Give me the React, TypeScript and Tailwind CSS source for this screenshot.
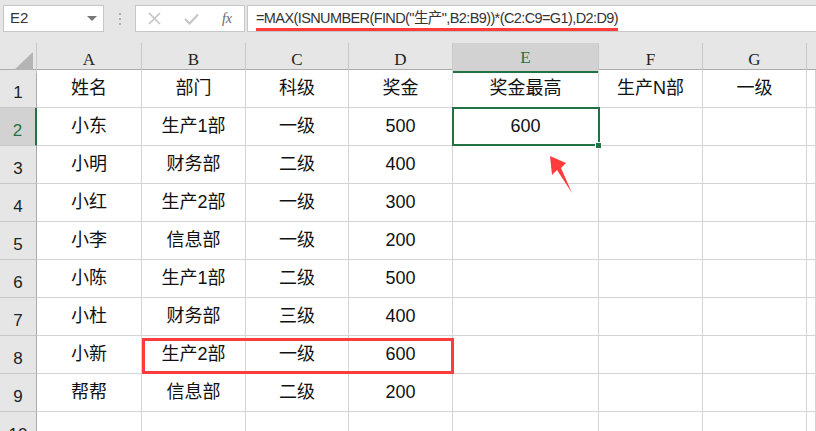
import React from "react";

// Spreadsheet snapshot: formula bar + grid A1:G10 with annotations

const COLS = ["A", "B", "C", "D", "E", "F", "G", ""];

const DATA: string[][] = [
  ["姓名", "部门", "科级", "奖金", "奖金最高", "生产N部", "一级"],
  ["小东", "生产1部", "一级", "500", "600", "", ""],
  ["小明", "财务部", "二级", "400", "", "", ""],
  ["小红", "生产2部", "一级", "300", "", "", ""],
  ["小李", "信息部", "一级", "200", "", "", ""],
  ["小陈", "生产1部", "二级", "500", "", "", ""],
  ["小杜", "财务部", "三级", "400", "", "", ""],
  ["小新", "生产2部", "一级", "600", "", "", ""],
  ["帮帮", "信息部", "二级", "200", "", "", ""],
  ["", "", "", "", "", "", ""],
];

const cellFont = { fontFamily: '"Liberation Sans", "Noto Sans CJK SC", sans-serif' };
const serifFont = { fontFamily: '"Liberation Serif", "Noto Sans CJK SC", serif' };

function FormulaBar() {
  return (
    <div className="h-[43px] bg-[#e6e6e6] flex items-start pt-[5px] pl-[3px]" style={cellFont}>
      {/* name box */}
      <div className="w-[101px] h-[27px] bg-white border border-[#c6c6c6] flex items-center justify-between pl-[6px] pr-[6px]">
        <span className="text-[15px] text-[#333]">E2</span>
        <span className="w-0 h-0 border-l-[5px] border-r-[5px] border-t-[5px] border-l-transparent border-r-transparent border-t-[#777]" />
      </div>
      {/* drag dots */}
      <div className="w-[31px] h-[27px] flex flex-col items-center justify-center gap-[3px]">
        <span className="w-[2px] h-[2px] bg-[#b0b0b0]" />
        <span className="w-[2px] h-[2px] bg-[#b0b0b0]" />
        <span className="w-[2px] h-[2px] bg-[#b0b0b0]" />
      </div>
      {/* cancel / enter / fx */}
      <div className="w-[110px] h-[27px] bg-white border border-[#c6c6c6] flex items-center justify-between px-[12px]">
        <svg width="13" height="13" viewBox="0 0 13 13">
          <path d="M1 1 L12 12 M12 1 L1 12" stroke="#c4c4c4" strokeWidth="1.6" />
        </svg>
        <svg width="15" height="12" viewBox="0 0 15 12">
          <path d="M1 6 L5.5 10.5 L14 1.5" stroke="#c4c4c4" strokeWidth="2" fill="none" />
        </svg>
        <span className="text-[14px] italic text-[#666]" style={serifFont}>
          fx
        </span>
      </div>
      {/* formula input */}
      <div className="ml-[2px] flex-1 h-[27px] bg-white border border-[#c6c6c6] border-r-0 pl-[8px] flex items-start">
        <span className="text-[14.5px] leading-[20px] mt-[2px] text-[#333] border-b-[3px] border-[#ff3b3b] tracking-[-0.6px]">
          =MAX(ISNUMBER(FIND("生产",B2:B9))*(C2:C9=G1),D2:D9)
        </span>
      </div>
    </div>
  );
}

function Sheet() {
  const grid = "grid grid-cols-[37px_105px_104px_103px_104px_146px_104px_104px_1fr]";
  return (
    <div className="bg-white">
      {/* column headers */}
      <div className={`${grid} h-[27px] bg-[#e6e6e6] border-b border-[#ababab]`}>
        <div className="relative border-r border-[#c8c8c8]">
          <svg className="absolute right-[3px] bottom-[3px]" width="19" height="18" viewBox="0 0 19 18">
            <polygon points="19,0 19,18 0,18" fill="#b4b4b4" />
          </svg>
        </div>
        {COLS.map((c, i) => (
          <div
            key={i}
            className={
              c === "E"
                ? "bg-[#d2d2d2] border-r border-[#c8c8c8] border-b-2 border-b-[#217346] flex items-center justify-center text-[17px] text-[#217346] pt-[2px]"
                : `${c ? "border-r border-[#c8c8c8]" : ""} flex items-center justify-center text-[17px] text-[#222] pt-[4px]`
            }
            style={serifFont}
          >
            {c}
          </div>
        ))}
      </div>

      {DATA.map((row, r) => (
        <div key={r} className={`${grid} h-[38px]`}>
          <div
            className={
              r === 1
                ? "bg-[#d2d2d2] border-r-2 border-[#217346] border-b border-b-[#c8c8c8] flex items-end justify-center pb-[2px] text-[17px] text-[#217346]"
                : "bg-[#e6e6e6] border-r border-[#ababab] border-b border-b-[#c8c8c8] flex items-end justify-center pb-[2px] text-[17px] text-[#222]"
            }
            style={cellFont}
          >
            {r + 1}
          </div>
          {[...row, ""].map((v, c) => (
            <div
              key={c}
              className="border-r border-b border-[#d4d4d4] flex items-center justify-center text-[18px] text-[#111]"
              style={cellFont}
            >
              {v}
            </div>
          ))}
        </div>
      ))}
    </div>
  );
}

export default function App() {
  return (
    <div className="relative w-[816px] h-[431px] overflow-hidden bg-white">
      <FormulaBar />
      <Sheet />

      {/* active cell E2 */}
      <div className="absolute left-[452px] top-[107px] w-[148px] h-[39px] border-2 border-[#217346] pointer-events-none" />
      <div className="absolute left-[595px] top-[142px] w-[7px] h-[7px] bg-[#217346] border border-white" />

      {/* highlight around B8:D8 */}
      <div className="absolute left-[142px] top-[338px] w-[312px] h-[36px] border-[3px] border-[#ff3b3b] pointer-events-none" />

      {/* red arrow */}
      <svg className="absolute left-0 top-0 pointer-events-none" width="816" height="431">
        <polygon
          points="550,156 566,163 561,168 572,193 557,170 552,175"
          fill="#ff3b3b"
        />
      </svg>
    </div>
  );
}
